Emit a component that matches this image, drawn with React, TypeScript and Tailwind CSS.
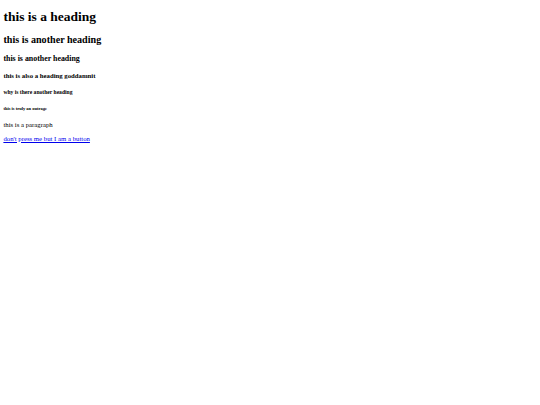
export default function App() {
  return (
    <div className="min-h-[405px] bg-white px-[3.4px] pb-[3.4px] text-black [font-family:'Liberation_Serif','Times_New_Roman',serif]">
      <h1 className="pt-[9.05px] text-[13.5px] font-bold leading-[15.5px]">this is a heading</h1>
      <h2 className="mt-[9.05px] text-[10.125px] font-bold leading-[11.65px]">this is another heading</h2>
      <h3 className="mt-[8.4px] text-[7.9px] font-bold leading-[9.07px]">this is another heading</h3>
      <h4 className="mt-[8.98px] text-[6.75px] font-bold leading-[7.76px]">this is also a heading goddamnit</h4>
      <h5 className="mt-[9.36px] text-[5.6px] font-bold leading-[6.44px]">why is there another heading</h5>
      <h6 className="mt-[10.3px] text-[4.52px] font-bold leading-[5.2px]">this is truly an outrage</h6>
      <p className="mt-[9.9px] text-[6.75px] leading-[7.76px]">this is a paragraph</p>
      <div className="mt-[6.4px] text-[6.75px] leading-[7.76px]">
        <a href="#" className="text-[#0000ee] underline">
          don't press me but I am a button
        </a>
      </div>
    </div>
  );
}
